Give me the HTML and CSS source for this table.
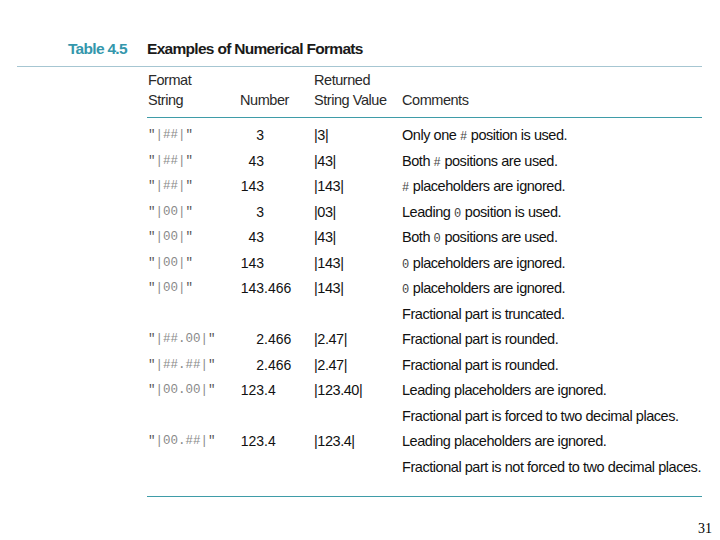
FILE: index.html
```html
<!DOCTYPE html>
<html>
<head>
<meta charset="utf-8">
<link rel="stylesheet" href="styles.css">
</head>
<body>
<div class="page">
  <div class="title"><span class="tnum">Table 4.5</span><span class="tname">Examples of Numerical Formats</span></div>
  <div class="rule-top"></div>
  <div class="tbl">
    <div class="head">
      <div>Format<br>String</div>
      <div class="hb">Number</div>
      <div>Returned<br>String Value</div>
      <div class="hb">Comments</div>
    </div>
    <div class="rows">
      <div class="fmt"><b>"</b>|##|<b>"</b></div><div class="num"><span class="ip">3</span></div><div>|3|</div><div>Only one <span class="sym">#</span> position is used.</div>
      <div class="fmt"><b>"</b>|##|<b>"</b></div><div class="num"><span class="ip">43</span></div><div>|43|</div><div>Both <span class="sym">#</span> positions are used.</div>
      <div class="fmt"><b>"</b>|##|<b>"</b></div><div class="num"><span class="ip">143</span></div><div>|143|</div><div><span class="sym">#</span> placeholders are ignored.</div>
      <div class="fmt"><b>"</b>|00|<b>"</b></div><div class="num"><span class="ip">3</span></div><div>|03|</div><div>Leading <span class="sym">0</span> position is used.</div>
      <div class="fmt"><b>"</b>|00|<b>"</b></div><div class="num"><span class="ip">43</span></div><div>|43|</div><div>Both <span class="sym">0</span> positions are used.</div>
      <div class="fmt"><b>"</b>|00|<b>"</b></div><div class="num"><span class="ip">143</span></div><div>|143|</div><div><span class="sym">0</span> placeholders are ignored.</div>
      <div class="fmt"><b>"</b>|00|<b>"</b></div><div class="num"><span class="ip">143</span>.466</div><div>|143|</div><div><span class="sym">0</span> placeholders are ignored.</div>
      <div></div><div></div><div></div><div>Fractional part is truncated.</div>
      <div class="fmt"><b>"</b>|##.00|<b>"</b></div><div class="num"><span class="ip">2</span>.466</div><div>|2.47|</div><div>Fractional part is rounded.</div>
      <div class="fmt"><b>"</b>|##.##|<b>"</b></div><div class="num"><span class="ip">2</span>.466</div><div>|2.47|</div><div>Fractional part is rounded.</div>
      <div class="fmt"><b>"</b>|00.00|<b>"</b></div><div class="num"><span class="ip">123</span>.4</div><div>|123.40|</div><div>Leading placeholders are ignored.</div>
      <div></div><div></div><div></div><div>Fractional part is forced to two decimal places.</div>
      <div class="fmt"><b>"</b>|00.##|<b>"</b></div><div class="num"><span class="ip">123</span>.4</div><div>|123.4|</div><div>Leading placeholders are ignored.</div>
      <div></div><div></div><div></div><div>Fractional part is not forced to two decimal places.</div>
    </div>
  </div>
  <div class="pgnum">31</div>
</div>
</body>
</html>
```

FILE: styles.css
```css
html, body {
  margin: 0;
  padding: 0;
  background: #ffffff;
}
.page {
  width: 720px;
  height: 540px;
  font-family: "Liberation Sans", Arial, sans-serif;
  color: #111;
}
.title {
  padding-top: 39px;
  padding-left: 68px;
  line-height: 20px;
  font-size: 15.5px;
  font-weight: bold;
  letter-spacing: -0.7px;
  display: flex;
}
.tnum {
  color: #3497ac;
  width: 79px;
}
.tname {
  color: #1a1a1a;
}
.rule-top {
  margin-top: 7px;
  margin-left: 17px;
  width: 685px;
  border-top: 1px solid #a6c6d2;
}
.tbl {
  margin-left: 147px;
  width: 555px;
}
.head {
  display: grid;
  grid-template-columns: 93px 74px 88px 1fr;
  padding-top: 3px;
  padding-bottom: 7px;
  border-bottom: 1px solid #3f9ca8;
  font-size: 14.5px;
  letter-spacing: -0.45px;
  line-height: 20px;
  color: #2a2a2a;
}
.head > div:first-child {
  padding-left: 1px;
}
.hb {
  align-self: end;
}
.rows {
  display: grid;
  grid-template-columns: 93px 74px 88px 1fr;
  grid-auto-rows: 25.5px;
  padding-top: 5px;
  padding-bottom: 16px;
  border-bottom: 1px solid #3f9ca8;
  font-size: 14.5px;
  letter-spacing: -0.45px;
  line-height: 25.5px;
  white-space: nowrap;
}
.fmt {
  padding-left: 1px;
  font-family: "Liberation Mono", monospace;
  font-size: 12.5px;
  letter-spacing: 0;
  color: #8a8a8a;
}
.fmt b {
  font-weight: normal;
  color: #555;
}
.num {
  letter-spacing: 0;
  font-size: 14px;
}
.ip {
  display: inline-block;
  width: 24px;
  text-align: right;
}
.sym {
  font-family: "Liberation Mono", monospace;
  font-size: 12px;
  letter-spacing: 0;
  color: #444;
}
.pgnum {
  margin-top: 24px;
  padding-right: 8px;
  text-align: right;
  font-family: "Liberation Serif", serif;
  font-size: 14px;
  line-height: 16px;
  color: #000;
}
```
